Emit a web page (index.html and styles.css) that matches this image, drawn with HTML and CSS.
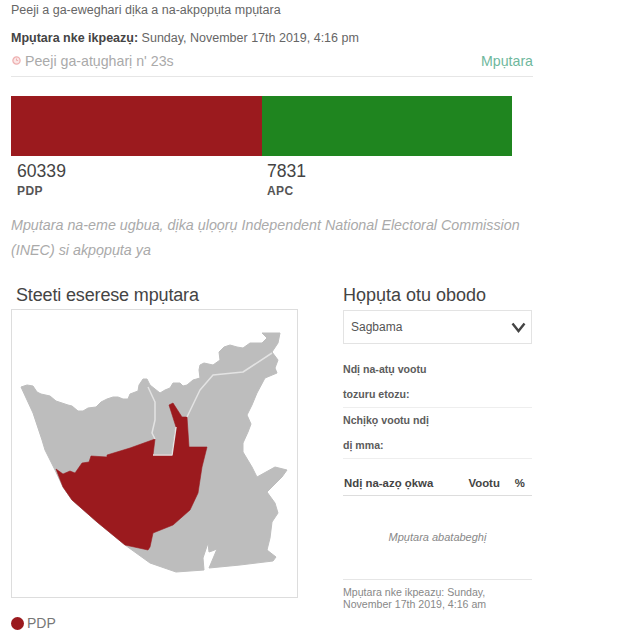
FILE: index.html
```html
<!DOCTYPE html>
<html lang="ig">
<head>
<meta charset="utf-8">
<title>Mputara</title>
<link rel="stylesheet" href="styles.css">
</head>
<body>
<main class="page">
  <p class="intro">Peeji a ga-eweghari dịka a na-akpọpụta mpụtara</p>
  <p class="updated"><b>Mpụtara nke ikpeazụ:</b> Sunday, November 17th 2019, 4:16 pm</p>
  <div class="refresh">
    <span class="countdown">
      <svg class="clock" width="9" height="9" viewBox="0 0 9 9"><circle cx="4.5" cy="4.5" r="3.6" fill="#fbe6e6" stroke="#eeb0b0" stroke-width="1.3"/><path d="M4.5 2.5v2h1.6" fill="none" stroke="#eeb0b0"/></svg>
      Peeji ga-atụgharị n' 23s
    </span>
    <span class="tab">Mpụtara</span>
  </div>
  <div class="bar"><div class="seg seg-pdp"></div><div class="seg seg-apc"></div></div>
  <div class="totals">
    <div class="total"><div class="num">60339</div><div class="party">PDP</div></div>
    <div class="total"><div class="num">7831</div><div class="party">APC</div></div>
  </div>
  <p class="note">Mpụtara na-eme ugbua, dịka ụlọọrụ Independent National Electoral Commission (INEC) si akpọpụta ya</p>
  <div class="columns">
    <section class="left">
      <h2 class="head head-map">Steeti eserese mpụtara</h2>
      <div class="map">
        <svg width="285" height="287" viewBox="12 310 285 287">
          <path class="land" d="M21 387L27 385 33 386 37 392 41 394 50 396 56 401 62 403 68 405 72 406 78 411 83 411 88 408 96 407 101 402 107 399 113 397 118 397 123 399 128 399 130 394 138 391 139 385 143 379 147 379 150 385 160 393 165 390 170 388 173 383 180 383 183 386 187 385 193 380 200 378 199 370 200 365 204 363 213 365 220 360 219 352 224 347 230 345 237 347 243 348 250 343 262 343 267 338 262 333 280 333 278 343 272 352 278 360 275 368 277 373 265 378 257 393 252 405 247 415 251 424 248 432 243 443 243 452 252 467 257 477 266 472 275 467 287 470 282 477 267 492 275 503 278 513 272 522 270 538 267 550 276 557 273 561 240 565 209 568 217 549 212 551 209 552 208 543 203 558 204 570 176 572 150 563 125 545 97 522 72 500 63 487 55 470 45 450 42 440 33 413 27 400Z"/>
          <path class="won" d="M56 469L63 474 70 471 75 473 82 463 89 462 91 456 107 457 107 455 130 448 155 439 153 455 172 455 176 427 169 405 173 403 182 417 187 417 189 447 207 447 202 467 200 480 198 493 190 510 173 525 153 533 150 547 148 550 125 545 97 522 72 500 63 487Z"/>
          <path class="border" d="M148 387L155 402 155 420 152 433 155 439M153 455L172 455 176 427M187 417L200 390 213 375 243 372 272 353"/>
        </svg>
      </div>
      <div class="legend"><span class="dot"></span>PDP</div>
    </section>
    <section class="right">
      <h2 class="head">Họpụta otu obodo</h2>
      <div class="select">
        <span>Sagbama</span>
        <svg width="15" height="11" viewBox="0 0 15 11"><path d="M1.5 1.5L7.5 9 13.5 1.5" fill="none" stroke="#444" stroke-width="2.4"/></svg>
      </div>
      <dl class="stats">
        <dt class="stat">Ndị na-atụ vootu<br>tozuru etozu:</dt>
        <dt class="stat">Nchịkọ vootu ndị<br>dị mma:</dt>
      </dl>
      <div class="table-head"><span class="col-name">Ndị na-azọ ọkwa</span><span class="col-votes">Vootu</span><span class="col-pct">%</span></div>
      <p class="empty">Mpụtara abatabeghị</p>
      <p class="foot">Mpụtara nke ikpeazụ: Sunday, November 17th 2019, 4:16 am</p>
    </section>
  </div>
</main>
</body>
</html>
```
FILE: styles.css
```css
* { box-sizing: border-box; }
html, body { margin: 0; padding: 0; background: #fff; }
body { font-family: "Liberation Sans", Arial, sans-serif; color: #555; overflow: hidden; }
.page { width: 522px; height: 632px; margin-left: 11px; padding-top: 1px; }
p { margin: 0; }
.intro { font-size: 12.5px; line-height: 18px; color: #666; }
.updated { font-size: 12.5px; line-height: 18px; margin-top: 10px; color: #666; }
.updated b { color: #444; }
.refresh { display: flex; justify-content: space-between; align-items: center; height: 30px; border-bottom: 1px solid #e6e6e6; font-size: 14.2px; line-height: 20px; padding-bottom: 2px; }
.countdown { color: #aaa; display: flex; align-items: center; gap: 4px; }
.clock { margin-left: 1px; }
.tab { color: #6fb89d; }
.bar { display: flex; width: 501px; height: 60px; margin-top: 19px; }
.seg { flex: 1; }
.seg-pdp { background: #9b1a1e; }
.seg-apc { background: #1f851f; }
.totals { display: flex; width: 501px; }
.total { flex: 1; padding-left: 6px; }
.num { font-size: 17.6px; line-height: 20px; margin-top: 5px; color: #444; }
.party { font-size: 12px; font-weight: bold; line-height: 16px; margin-top: 2px; color: #555; letter-spacing: .4px; }
.total + .total { padding-left: 5px; }
.note { width: 522px; margin-top: 14px; font-size: 14.3px; line-height: 25px; font-style: italic; color: #aaa; }
.columns { display: flex; margin-top: 20px; width: 522px; }
.left { width: 287px; }
.right { width: 189px; margin-left: 45px; }
.head { margin: 0; font-size: 18px; font-weight: normal; line-height: 24px; color: #444; height: 26px; }
.head-map { padding-left: 5px; letter-spacing: -.15px; }
.map { width: 287px; height: 289px; border: 1px solid #ddd; display: flex; }
.land { fill: #bdbdbd; stroke: #bdbdbd; stroke-width: 1; stroke-linejoin: round; }
.won { fill: #9b1a1e; stroke: #9b1a1e; stroke-width: .6; stroke-linejoin: round; }
.border { fill: none; stroke: #e3e3e3; stroke-width: 1.5; stroke-linejoin: round; }
.legend { display: flex; align-items: center; gap: 3px; margin-top: 15px; font-size: 14px; line-height: 20px; color: #777; }
.dot { width: 13px; height: 13px; border-radius: 50%; background: #9b1a1e; }
.select { display: flex; justify-content: space-between; align-items: center; height: 34px; margin-top: 1px; padding: 0 5px 0 7px; border: 1px solid #e3e3e3; font-size: 12px; color: #555; }
.stats { margin: 13px 0 0; }
.stat { font-size: 10.6px; font-weight: bold; line-height: 25px; color: #5c5c5c; border-bottom: 1px solid #eee; }
.table-head { display: flex; align-items: center; height: 25px; margin-top: 12px; border-bottom: 1px solid #ddd; font-size: 11.4px; font-weight: bold; color: #444; padding-bottom: 1px; }
.col-name { flex: 1; padding-left: 1px; }
.col-votes { margin-right: 15px; }
.col-pct { margin-right: 7px; }
.empty { height: 84px; display: flex; align-items: center; justify-content: center; border-bottom: 1px solid #e6e6e6; padding-bottom: 2px; font-size: 11px; font-style: italic; color: #888; }
.foot { margin-top: 6px; font-size: 10.6px; line-height: 12px; color: #888; }
```
